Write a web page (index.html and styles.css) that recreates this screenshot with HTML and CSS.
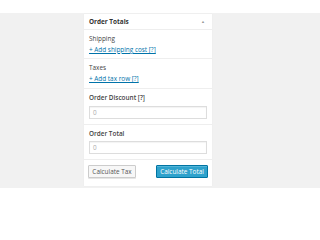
FILE: index.html
```html
<!DOCTYPE html>
<html>
<head>
<meta charset="utf-8">
<link rel="stylesheet" href="styles.css">
</head>
<body>
<div class="top"></div>
<div class="stage">
  <div class="panel">
    <div class="header">
      <span class="title">Order Totals</span>
      <span class="arrow">&#9650;</span>
    </div>
    <div class="section">
      <div class="label">Shipping</div>
      <a class="link">+ Add shipping cost [?]</a>
    </div>
    <div class="section">
      <div class="label">Taxes</div>
      <a class="link">+ Add tax row [?]</a>
    </div>
    <div class="section field">
      <div class="label strong">Order Discount [?]</div>
      <div class="input">0</div>
    </div>
    <div class="section field">
      <div class="label strong">Order Total</div>
      <div class="input">0</div>
    </div>
    <div class="actions">
      <span class="btn btn-secondary">Calculate Tax</span>
      <span class="btn btn-primary">Calculate Total</span>
    </div>
  </div>
</div>
</body>
</html>
```
FILE: styles.css
```css
html, body {
  margin: 0;
  padding: 0;
  background: #ffffff;
  font-family: "Open Sans", "Noto Sans", sans-serif;
  font-size: 6.4px;
  line-height: 8px;
  color: #444444;
}
.top {
  height: 13px;
  background: #ffffff;
}
.stage {
  height: 175px;
  background: #f1f1f1;
  padding-top: 1px;
  box-sizing: border-box;
}
.panel {
  margin-left: 84px;
  width: 128px;
  height: 172px;
  background: #ffffff;
  box-shadow: 0 0 1px rgba(0,0,0,0.06);
}
.header {
  display: flex;
  justify-content: space-between;
  align-items: center;
  height: 16px;
  padding: 0 5px;
  box-sizing: border-box;
  border-bottom: 1px solid #eeeeee;
}
.title {
  font-weight: 700;
  color: #333333;
}
.arrow {
  font-size: 4px;
  color: #999999;
  margin-right: 2px;
}
.section {
  display: flex;
  flex-direction: column;
  align-items: flex-start;
  padding: 5px 5px 4px;
  border-bottom: 1px solid #eeeeee;
  gap: 3px;
}
.section + .section {
  padding-bottom: 5px;
}
.label {
  color: #444444;
}
.strong {
  font-weight: 600;
}
.link {
  color: #0073aa;
  text-decoration: underline;
  text-decoration-thickness: 0.6px;
  text-underline-offset: 1px;
}
.field {
  align-items: stretch;
  gap: 4px;
}
.field + .field {
  gap: 3px;
}
.input {
  height: 13px;
  box-sizing: border-box;
  border: 1px solid #dddddd;
  box-shadow: inset 0 1px 1px rgba(0,0,0,0.05);
  padding: 0 3px;
  line-height: 11px;
  color: #aaaaaa;
  font-size: 6.4px;
}
.actions {
  display: flex;
  justify-content: space-between;
  padding: 5px 4px 0;
}
.btn {
  height: 13px;
  box-sizing: border-box;
  line-height: 11px;
  padding: 0 2px;
  border-radius: 1px;
  font-size: 6.4px;
  text-align: center;
  white-space: nowrap;
}
.btn-secondary {
  width: 48px;
  background: #f7f7f7;
  border: 1px solid #cccccc;
  color: #555555;
  box-shadow: 0 1px 0 #e5e5e5;
}
.btn-primary {
  width: 52px;
  background: #2ea2cc;
  border: 1px solid #0074a2;
  color: #ffffff;
  box-shadow: inset 0 1px 0 rgba(120,200,230,0.5);
}
```
